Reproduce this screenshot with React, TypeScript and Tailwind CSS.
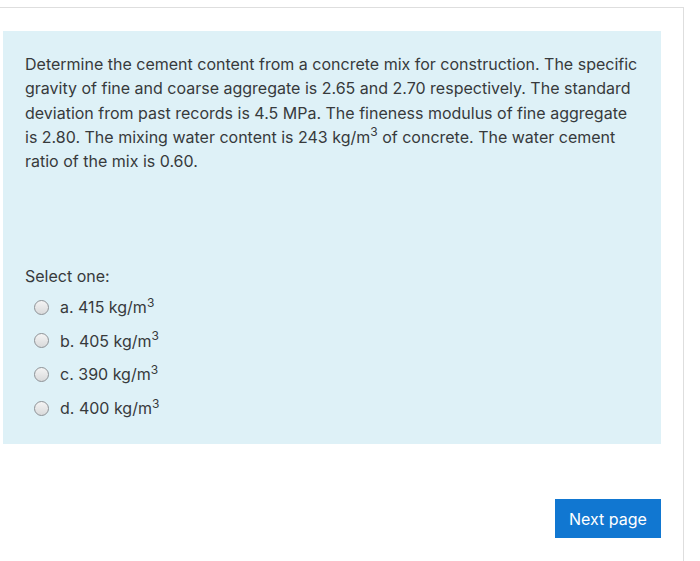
import React from "react";

function Radio() {
  return (
    <span className="inline-block w-[15px] h-[15px] rounded-full border border-[#8e9296] bg-gradient-to-b from-[#f4f4f4] to-[#d9dadb] shrink-0" />
  );
}

const options = [
  { l: "a.", v: "415" },
  { l: "b.", v: "405" },
  { l: "c.", v: "390" },
  { l: "d.", v: "400" },
];

export default function App() {
  return (
    <div className="w-[700px] h-[561px] bg-white pt-[7px] text-[#373a3c]" style={{ fontFamily: "Inter, 'Noto Sans', sans-serif" }}>
      <div className="w-[684px] h-[554px] border-t border-r border-[#dedede] pt-[23px] pl-[3px] flex flex-col">
        <div className="w-[658px] h-[413px] bg-[#def1f7] pl-[22px] pr-[20px] pt-[21px] flex flex-col">
          <p className="text-[16px] leading-[24.25px]">
            Determine the cement content from a concrete mix for construction. The specific gravity of fine and coarse aggregate is 2.65 and 2.70 respectively. The standard deviation from past records is 4.5 MPa. The fineness modulus of fine aggregate is 2.80. The mixing water content is 243 kg/m<sup className="text-[12px] top-[-0.55em]">3</sup> of concrete. The water cement ratio of the mix is 0.60.
          </p>
          <div className="mt-[91px] text-[16px] leading-[24px]">Select one:</div>
          <div className="flex flex-col mt-[2px]">
            {options.map((o) => (
              <div key={o.l} className="h-[33.7px] flex items-center gap-[11px] pl-[9px] text-[16px]">
                <Radio />
                <span>
                  {o.l} {o.v} kg/m<sup className="text-[12px] top-[-0.55em]">3</sup>
                </span>
              </div>
            ))}
          </div>
        </div>
        <div className="flex justify-end pr-[22px] mt-[55px]">
          <button className="w-[106px] h-[39px] bg-[#1177d1] text-white text-[16px] flex items-center justify-center">
            Next page
          </button>
        </div>
      </div>
    </div>
  );
}
